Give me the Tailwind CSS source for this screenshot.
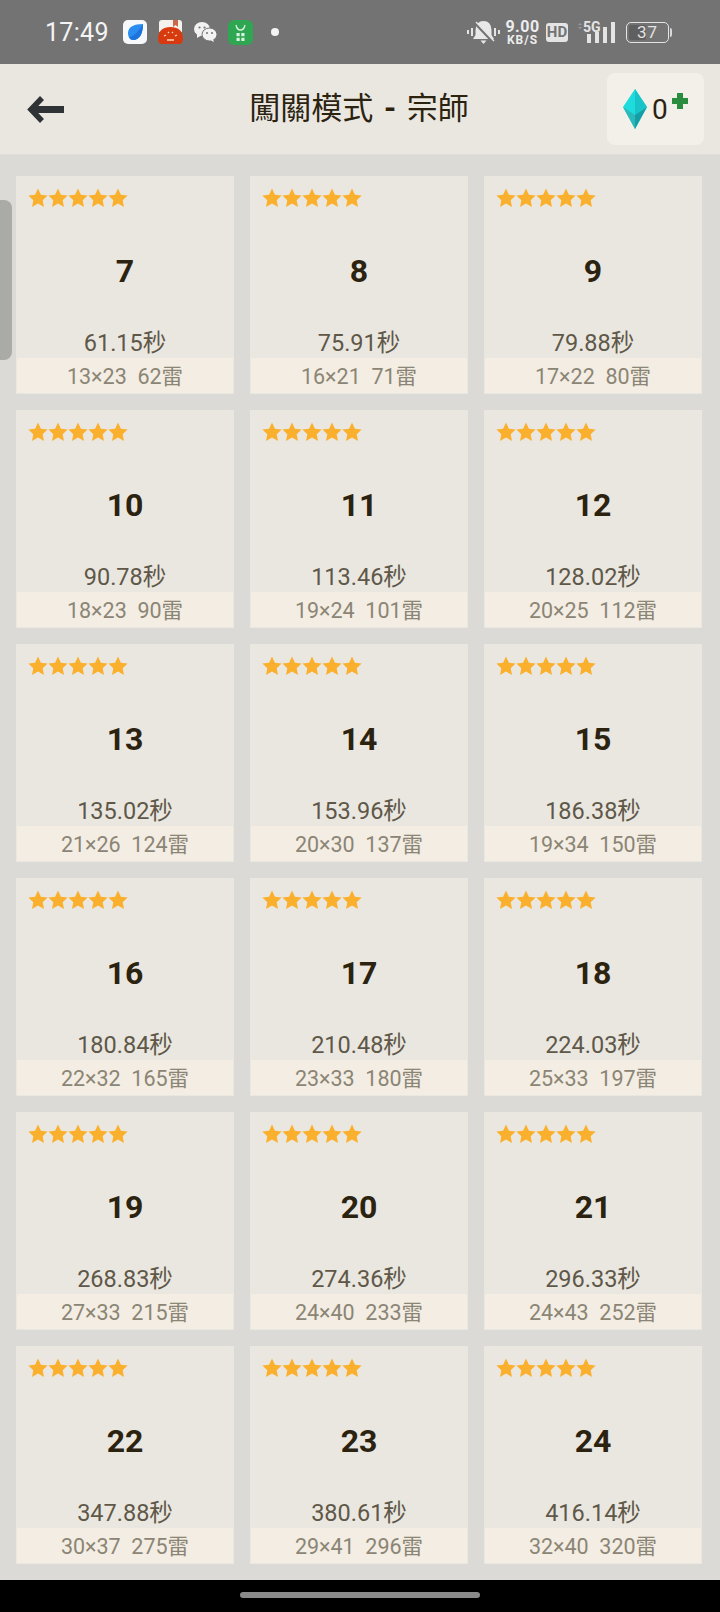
<!DOCTYPE html>
<html lang="zh-Hant">
<head>
    <meta charset="UTF-8">
    <meta name="viewport" content="width=device-width, initial-scale=1.0">
    <title>闖關模式 - 宗師</title>
    <script src="https://cdn.jsdelivr.net/npm/@tailwindcss/browser@4"></script>
</head>
<body class="w-[720px] h-[1612px] overflow-hidden relative bg-[#dbdad6] font-['Roboto','Noto_Sans_CJK_TC',sans-serif]">

    <!-- status bar -->
    <div class="h-[64px] bg-[#737373] flex items-center text-white">
        <span class="ml-[45px] w-[78px] text-[25px] leading-none tracking-[0.3px] text-[#f4f4f4]">17:49</span>
        <svg class="w-[24px] h-[24px]" viewBox="0 0 24 24">
            <rect width="24" height="24" rx="5" fill="#f7f8fa"/>
            <path d="M5 13C5 7 11 4 20 4C20 13 17 20 10 20C7 20 5 17 5 13Z" fill="#2b8df0"/>
            <path d="M6 17C9 17 14 14 20 4C20 13 17 20 10 20C8 20 7 19 6 17Z" fill="#1e74db"/>
        </svg>
        <svg class="ml-[11px] w-[25px] h-[24px]" viewBox="0 0 25 24">
            <path d="M4 0H21Q24 0 24 3V12H1V3Q1 0 4 0Z" fill="#f5f2ee"/>
            <path d="M15 0H20V7L17.5 5L15 7Z" fill="#c86a48"/>
            <path d="M0 18Q1 7 12.500 7Q24 7 25 18Q25 24 21 24H4Q0 24 0 18Z" fill="#d83a10"/>
            <path d="M6 16L8 15M10 12L11 13M15 12L14 13M19 15L17 16M9 20H16" stroke="#f6d9b8" stroke-width="1.300"/>
        </svg>
        <svg class="ml-[11px] w-[23px] h-[22px]" viewBox="0 0 23 22">
            <ellipse cx="8" cy="8" rx="8" ry="7" fill="#f2f2f2"/>
            <path d="M3 12L3 17L8 14Z" fill="#f2f2f2"/>
            <ellipse cx="15.500" cy="13.500" rx="7.500" ry="6.500" stroke="#737373" stroke-width="1" fill="#f2f2f2"/>
            <path d="M19 18L20 21L16 19Z" fill="#f2f2f2"/>
            <circle cx="5.500" cy="6.500" r="1.100" fill="#737373"/>
            <circle cx="10.500" cy="6.500" r="1.100" fill="#737373"/>
            <circle cx="13" cy="12" r="1" fill="#737373"/>
            <circle cx="18" cy="12" r="1" fill="#737373"/>
        </svg>
        <svg class="ml-[11px] w-[25px] h-[25px]" viewBox="0 0 25 25">
            <rect width="25" height="25" rx="6" fill="#2fa651"/>
            <path d="M8 5Q9 10 12.500 10Q16 10 17 5" fill="none" stroke="#d8f2df" stroke-width="1.300"/>
            <rect x="8.500" y="13" width="3.200" height="3.200" fill="#d8f2df"/>
            <rect x="13.300" y="13" width="3.200" height="3.200" fill="#d8f2df"/>
            <rect x="8.500" y="17.800" width="3.200" height="3.200" fill="#d8f2df"/>
            <rect x="13.300" y="17.800" width="3.200" height="3.200" fill="#d8f2df"/>
        </svg>
        <span class="ml-[18px] w-[8px] h-[8px] rounded-full bg-[#f4f4f4]"></span>

        <svg class="ml-auto w-[33px] h-[24px]" viewBox="0 0 33 24">
            <path d="M1 10V14M5 8V16M28 8V16M32 10V14" stroke="#e4e4e4" stroke-width="2" fill="none"/>
            <path d="M16.500 1Q24 1 24.500 10V15L27 19H6L8.500 15V10Q9 1 16.500 1Z" fill="#e8e8e8"/>
            <path d="M13.500 20.500H19.500L16.500 24Z" fill="#e8e8e8"/>
            <path d="M7 2L26 22" stroke="#737373" stroke-width="2.600"/>
            <path d="M9 2L27 21" stroke="#e8e8e8" stroke-width="1.400"/>
        </svg>
        <div class="ml-[6px] mt-[2px] w-[33px] flex flex-col items-center text-[#ededed] font-bold">
            <span class="text-[16px] leading-[14px] tracking-[0.5px]">9.00</span>
            <span class="text-[12px] leading-[12px] tracking-[1px]">KB/S</span>
        </div>
        <span class="ml-[7px] w-[22px] h-[19px] rounded-[3px] bg-[#e4e4e4] text-[#737373] text-[15px] leading-[19px] font-bold text-center">HD</span>
        <svg class="ml-[9px] w-[39px] h-[24px]" viewBox="0 0 39 24">
            <path d="M1 5L3 3L5 5ZM1 7L3 9L5 7Z" fill="#9a9a9a"/>
            <text x="6" y="12" font-family="Roboto" font-size="14" font-weight="700" fill="#e4e4e4">5G</text>
            <rect x="10" y="14" width="4" height="9" fill="#e4e4e4"/>
            <rect x="18" y="12" width="4" height="11" fill="#e4e4e4"/>
            <rect x="26" y="7" width="4" height="16" fill="#e4e4e4"/>
            <rect x="34" y="2" width="4" height="21" fill="#e4e4e4"/>
        </svg>
        <div class="ml-[10px] w-[43px] h-[21px] rounded-[5px] border border-[#e4e4e4] p-[2px] relative">
            <div class="w-[17px] h-full bg-[#5f5f5f] rounded-[2px]"></div>
            <span class="absolute inset-0 text-center text-[#e2e2e2] text-[17px] leading-[19px] tracking-[1px]">37</span>
        </div>
        <span class="ml-[1px] mr-[48px] w-[2px] h-[9px] bg-[#d8d8d8] rounded-r-sm"></span>
    </div>

    <!-- header -->
    <div class="h-[91px] bg-[#eae7e1] border-b border-[#e0ded9] flex items-start">
        <div class="w-[113px] pl-[27px] pt-[31px]">
            <svg class="w-[38px] h-[30px]" viewBox="0 0 38 30">
                <path d="M15 3L4 14.500L15 26" fill="none" stroke="#2f3335" stroke-width="5.500"/>
                <path d="M6 14.500H37" stroke="#2f3335" stroke-width="7"/>
            </svg>
        </div>
        <h1 class="flex-1 text-center text-[31px] leading-[46px] mt-[22px] pr-[2px] font-normal text-[#2b2310] whitespace-pre [word-spacing:3px]">闖關模式 <span class="font-bold">-</span> 宗師</h1>
        <div class="w-[97px] h-[72px] mt-[9px] mr-[16px] rounded-[8px] bg-[#f3f0e9] flex items-start relative">
            <svg class="ml-[16px] mt-[16px] w-[24px] h-[40px]" viewBox="0 0 24 40">
                <path d="M12 0L0 18L12 40L24 18Z" fill="#1fdcdc"/>
                <path d="M12 0L24 18L12 26Z" fill="#18c4c8"/>
                <path d="M0 18L12 26L12 40Z" fill="#2bb9bb"/>
                <path d="M24 18L12 26L12 40Z" fill="#149fa6"/>
            </svg>
            <span class="ml-[5px] mt-[20px] text-[28px] leading-[34px] text-[#2b2310]">0</span>
            <svg class="absolute left-[65px] top-[20px] w-[16px] h-[16px]" viewBox="0 0 16 16">
                <path d="M5 0H11V5H16V11H11V16H5V11H0V5H5Z" fill="#2a8c3f"/>
            </svg>
        </div>
    </div>

    <!-- levels -->
    <div id="levels" class="h-[1425px] pt-[21px] px-[16px] grid grid-cols-[218px_218px_218px] auto-rows-[218px] gap-[16px]"></div>

    <!-- scroll handle -->
    <div class="absolute left-0 top-[200px] w-[12px] h-[160px] bg-[#aaaba6] rounded-r-[8px]"></div>

    <!-- navigation bar -->
    <div class="h-[32px] bg-black flex justify-center pt-[12px]">
        <div class="w-[240px] h-[6px] rounded-full bg-[#8a8a8a]"></div>
    </div>

    <script>
        const levels = [
            [7, '61.15', '13×23', 62], [8, '75.91', '16×21', 71], [9, '79.88', '17×22', 80],
            [10, '90.78', '18×23', 90], [11, '113.46', '19×24', 101], [12, '128.02', '20×25', 112],
            [13, '135.02', '21×26', 124], [14, '153.96', '20×30', 137], [15, '186.38', '19×34', 150],
            [16, '180.84', '22×32', 165], [17, '210.48', '23×33', 180], [18, '224.03', '25×33', 197],
            [19, '268.83', '27×33', 215], [20, '274.36', '24×40', 233], [21, '296.33', '24×43', 252],
            [22, '347.88', '30×37', 275], [23, '380.61', '29×41', 296], [24, '416.14', '32×40', 320]
        ];
        const star = '<svg class="w-[20px] h-[20px]" viewBox="0 0 20 20"><path d="M10 .5L12.900 6.800L19.600 7.600L14.700 12.200L16 19L10 15.600L4 19L5.300 12.200L.4 7.600L7.100 6.800Z" fill="#fbb02d"/></svg>';

        document.getElementById('levels').innerHTML = levels.map(([n, time, size, mines]) => `
            <div class="bg-[#eae7e1] flex flex-col">
                <div class="flex mt-[12px] ml-[12px] h-[20px]">${star.repeat(5)}</div>
                <div class="mt-[43px] h-[40px] text-center text-[32px] leading-[40px] font-bold text-[#2b2310]">${n}</div>
                <div class="mt-[38px] h-[29px] text-center text-[23.5px] leading-[29px] text-[#5f5848]">${time}秒</div>
                <div class="mx-px h-[35px] pt-px bg-[#f3ede3] text-center text-[21.5px] leading-[35px] text-[#8b8575] whitespace-pre">${size}  ${mines}雷</div>
            </div>`).join('');
    </script>
</body>
</html>
